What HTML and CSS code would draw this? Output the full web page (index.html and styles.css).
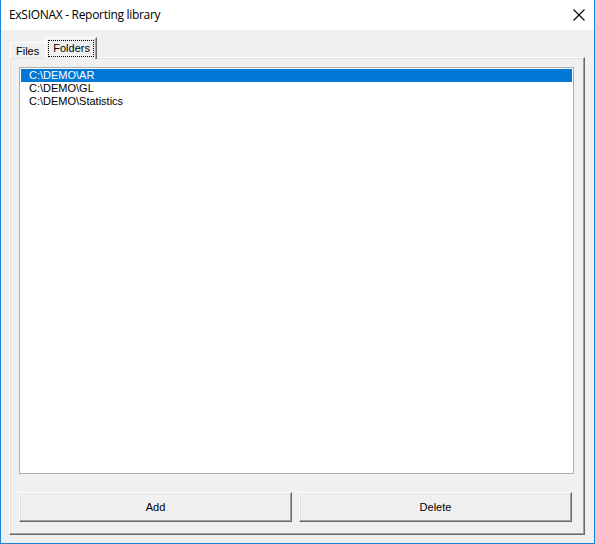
FILE: index.html
```html
<!DOCTYPE html>
<html lang="en">
<head>
    <meta charset="UTF-8">
    <title>ExSIONAX - Reporting library</title>
    <link rel="stylesheet" href="styles.css">
</head>
<body>
    <div class="window">
        <!-- Title bar -->
        <header class="titlebar">
            <span class="title">ExSIONAX - Reporting library</span>
            <button class="close" aria-label="Close">
                <svg width="12" height="12" viewBox="0 0 12 12">
                    <path d="M0.5 0.5 L11.5 11.5 M11.5 0.5 L0.5 11.5" stroke="#000" stroke-width="1.1" fill="none"/>
                </svg>
            </button>
        </header>

        <div class="client">
            <!-- Tabs -->
            <div class="tabs">
                <div class="tab">Files</div>
                <div class="tab active"><span class="focus">Folders</span></div>
            </div>

            <!-- Folders page -->
            <div class="panel">
                <ul class="listbox">
                    <li class="item selected">C:\DEMO\AR</li>
                    <li class="item">C:\DEMO\GL</li>
                    <li class="item">C:\DEMO\Statistics</li>
                </ul>
                <div class="actions">
                    <button class="btn">Add</button>
                    <button class="btn">Delete</button>
                </div>
            </div>
        </div>
    </div>
</body>
</html>
```

FILE: styles.css
```css
* {
    margin: 0;
    padding: 0;
    box-sizing: border-box;
}

body {
    font-family: "Liberation Sans", Arial, sans-serif;
    font-size: 11px;
    color: #000;
    background: #fff;
}

.window {
    width: 595px;
    height: 544px;
    border: 1px solid #1883d7;
    border-top: none;
    background: #f0f0f0;
    display: flex;
    flex-direction: column;
}

/* Title bar */
.titlebar {
    height: 30px;
    background: #fff;
    display: flex;
    align-items: center;
    justify-content: space-between;
    padding-left: 8px;
}

.title {
    font-family: "Open Sans", "Liberation Sans", sans-serif;
    font-size: 12px;
    letter-spacing: -0.3px;
    padding-bottom: 1px;
}

.close {
    width: 46px;
    height: 30px;
    border: none;
    background: none;
    display: flex;
    align-items: center;
    justify-content: center;
    margin-right: -1px;
    padding-left: 14px;
}

/* Client area */
.client {
    padding: 8px 0 0 8px;
}

.tabs {
    display: flex;
    align-items: flex-end;
    height: 20px;
    padding-left: 1px;
    position: relative;
    z-index: 1;
    margin-bottom: -1px;
}

.tab {
    height: 16px;
    padding: 1px 6px 0 5px;
    border-top: 1px solid #fff;
    border-left: 1px solid #fff;
    border-right: 1px solid #a0a0a0;
    background: #f0f0f0;
    line-height: 14px;
}

.tab.active {
    height: 22px;
    margin-left: -1px;
    margin-bottom: -1px;
    padding: 2px 2px 0 2px;
    border-right: 1px solid #696969;
    box-shadow: inset -1px 0 #a0a0a0;
}

.focus {
    display: block;
    padding: 0 3px 1px 4px;
    border: 1px dotted #000;
    line-height: 14px;
}

.panel {
    width: 576px;
    height: 478px;
    border-top: 1px solid #fff;
    border-left: 1px solid #fff;
    border-right: 1px solid #696969;
    border-bottom: 1px solid #696969;
    box-shadow: inset -1px -1px #a0a0a0, inset 1px 1px #e3e3e3;
    padding: 9px 0 0 9px;
    display: flex;
    flex-direction: column;
    gap: 18px;
}

.listbox {
    list-style: none;
    width: 555px;
    height: 407px;
    background: #fff;
    border: 1px solid #adadad;
    padding: 1px;
}

.item {
    height: 13px;
    line-height: 13px;
    padding-left: 8px;
    white-space: pre;
}

.item.selected {
    background: #0078d7;
    color: #fff;
}

.actions {
    display: grid;
    grid-template-columns: 273px 273px;
    gap: 7px;
}

.btn {
    height: 30px;
    font-family: inherit;
    font-size: 11px;
    color: #000;
    background: #f0f0f0;
    border-top: 1px solid #fff;
    border-left: 1px solid #fff;
    border-right: 1px solid #696969;
    border-bottom: 1px solid #696969;
    box-shadow: inset -1px -1px #a0a0a0, inset 1px 1px #e3e3e3;
}
```
